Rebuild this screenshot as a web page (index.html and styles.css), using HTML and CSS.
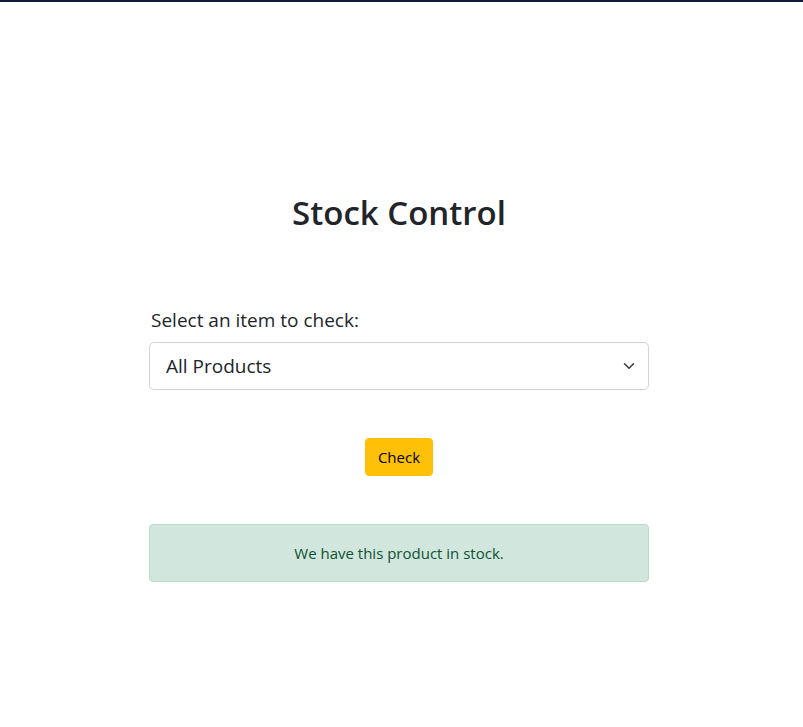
FILE: index.html
```html
<!DOCTYPE html>
<html lang="en">
<head>
<meta charset="utf-8">
<title>Stock Control</title>
<link rel="stylesheet" href="styles.css">
</head>
<body>
<main class="page">
  <h1 class="title">Stock Control</h1>
  <form class="stock-form">
    <label class="form-label" for="item">Select an item to check:</label>
    <div class="select-wrap">
      <select id="item" class="form-select">
        <option>All Products</option>
      </select>
      <svg class="chevron" viewBox="0 0 16 16" width="16" height="12" aria-hidden="true"><path fill="none" stroke="#343a40" stroke-linecap="round" stroke-linejoin="round" stroke-width="2" d="M2 5l6 6 6-6"/></svg>
    </div>
    <div class="actions">
      <button type="button" class="btn-check">Check</button>
    </div>
  </form>
  <div class="alert">We have this product in stock.</div>
</main>
</body>
</html>
```

FILE: styles.css
```css
html, body {
  margin: 0;
  padding: 0;
  background: #fff;
}
body {
  border-top: 2px solid #111c3f;
  font-family: "Open Sans", "Noto Sans", "Liberation Sans", sans-serif;
  color: #212529;
  padding-right: 5px;
}
.page {
  width: 500px;
  margin: 0 auto;
  padding-top: 191px;
  display: flex;
  flex-direction: column;
}
.title {
  margin: 0;
  text-align: center;
  font-size: 33px;
  font-weight: 600;
  line-height: 1.2;
}
.stock-form {
  margin-top: 73px;
  display: flex;
  flex-direction: column;
}
.form-label {
  font-size: 19px;
  line-height: 28.5px;
  margin: 0 0 8px 2px;
  color: #212529;
}
.select-wrap {
  position: relative;
}
.form-select {
  display: block;
  width: 100%;
  height: 48px;
  box-sizing: border-box;
  appearance: none;
  -webkit-appearance: none;
  background: #fff;
  border: 1px solid #ced4da;
  border-radius: 4.8px;
  padding: 0 40px 0 16px;
  font-family: inherit;
  font-size: 19px;
  color: #212529;
}
.chevron {
  position: absolute;
  right: 12px;
  top: 18px;
}
.actions {
  display: flex;
  justify-content: center;
  margin-top: 48px;
}
.btn-check {
  background: #ffc107;
  border: 1px solid #ffc107;
  border-radius: 4px;
  height: 38px;
  padding: 0 12px;
  font-family: inherit;
  font-size: 15px;
  color: #000;
}
.alert {
  margin-top: 48px;
  background: #d1e7dd;
  border: 1px solid #badbcc;
  border-radius: 4px;
  color: #0f5132;
  text-align: center;
  font-size: 15px;
  line-height: 24px;
  padding: 16px;
}
```
